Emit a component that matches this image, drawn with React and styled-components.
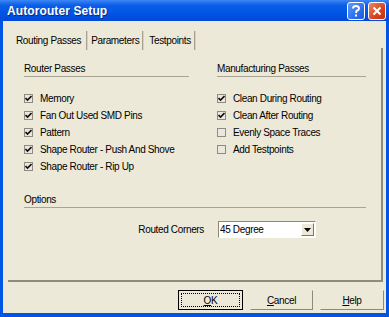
import React from 'react';
import styled, {createGlobalStyle} from 'styled-components';

const Global = createGlobalStyle`
html, body {
    margin: 0;
    padding: 0;
    background: #ece9d8;
}
body {
    font-family: "Liberation Sans", Arial, sans-serif;
    font-size: 10px;
    letter-spacing: -0.35px;
    color: #000;
}
`

const Window = styled.div`
width: 389px;
height: 317px;
display: flex;
flex-direction: column;
background: #0055e5;
box-sizing: border-box;
`

const TitleBar = styled.div`
height: 21px;
flex: none;
display: flex;
align-items: center;
padding: 0 3px 0 7px;
background: linear-gradient(#3d86f5 0%, #0a5ee8 25%, #0055e5 60%, #0049d9 100%);
color: #fff;
font-weight: bold;
font-size: 12px;
letter-spacing: 0.1px;
text-shadow: 1px 1px 0 #0a2a80;
`

const Title = styled.div`
flex: 1;
`

const CapButton = styled.div`
width: 16px;
height: 16px;
margin-left: 3px;
border: 1px solid #fff;
border-radius: 3px;
display: flex;
align-items: center;
justify-content: center;
background: ${({close}) => close
    ? 'linear-gradient(135deg, #e9886a, #d9421e 60%, #c03310)'
    : 'linear-gradient(135deg, #5d9cf7, #2c6ff0 60%, #1d58da)'};
`

const Client = styled.div`
flex: 1;
margin: 0 3px 4px 3px;
background: #ece9d8;
display: flex;
flex-direction: column;
`

const TabRow = styled.div`
display: flex;
align-items: stretch;
height: 19px;
margin-top: 10px;
padding-left: 13px;
`

const Tab = styled.div`
display: flex;
align-items: center;
padding: 0 ${({active}) => active ? '5px' : '3px'} 0 ${({active}) => active ? '0' : '2px'};
border-right: 1px solid #a6a28f;
box-shadow: 1px 0 0 #d6d2c2;
margin-right: ${({active}) => active ? '2px' : '4px'};
white-space: nowrap;
padding-bottom: 1px;
`

const Panel = styled.div`
height: 234px;
margin: -2px 3px 0 5px;
box-sizing: border-box;
border-right: 2px solid #8f8c7e;
border-bottom: 2px solid #8f8c7e;
padding: 15px 15px 0 16px;
display: flex;
flex-direction: column;
`

const Columns = styled.div`
display: flex;
gap: 28px;
`

const Column = styled.div`
width: ${({w}) => w}px;
`

const Heading = styled.div`
line-height: 12px;
height: 12px;
border-bottom: 1px solid #a7a493;
padding-bottom: 1px;
margin-bottom: 13px;
`

const Check = styled.label`
display: flex;
align-items: center;
height: 17px;
gap: 7px;
white-space: nowrap;
`

const Box = styled.span`
width: 7px;
height: 7px;
flex: none;
border: 1px solid #8d8b82;
background: #e9e8df;
display: flex;
align-items: center;
justify-content: center;
`

const Options = styled.div`
margin-top: 19px;
`

const OptionRow = styled.div`
display: flex;
align-items: center;
margin-top: 9px;
`

const OptionLabel = styled.div`
width: 180px;
text-align: right;
`

const Combo = styled.div`
margin-left: 14px;
width: 98px;
height: 17px;
box-sizing: border-box;
border-top: 1px solid #8b887b;
border-left: 1px solid #8b887b;
border-right: 1px solid #fff;
border-bottom: 1px solid #fff;
background: #fff;
display: flex;
align-items: center;
padding-left: 1px;
`

const ComboText = styled.div`
flex: 1;
`

const DropButton = styled.div`
width: 13px;
height: 13px;
margin-right: 1px;
box-sizing: border-box;
background: #ece9d8;
border-right: 1px solid #7b7868;
border-bottom: 1px solid #7b7868;
border-top: 1px solid #fff;
border-left: 1px solid #fff;
display: flex;
align-items: center;
justify-content: center;
`

const Buttons = styled.div`
display: flex;
justify-content: flex-end;
gap: 7px;
margin-top: 8px;
padding-right: 2px;
`

const Button = styled.div`
width: ${({w}) => w}px;
height: 20px;
box-sizing: border-box;
display: flex;
align-items: center;
justify-content: center;
border: 1px solid ${({primary}) => primary ? '#000' : '#ece9d8'};
border-right-color: ${({primary}) => primary ? '#000' : '#8d8a7c'};
border-bottom-color: ${({primary}) => primary ? '#000' : '#8d8a7c'};
padding: 2px;
`

const Focus = styled.div`
width: 100%;
height: 100%;
box-sizing: border-box;
display: flex;
align-items: center;
justify-content: center;
border: ${({on}) => on ? '1px dotted #000' : '1px solid transparent'};
`

const CheckItem = ({checked, children}) => (
    <Check>
        <Box>
            {checked && (
                <svg width="7" height="7" viewBox="0 0 7 7">
                    <path d="M0.5 3 L2.5 5 L6.5 1" stroke="#111" strokeWidth="1.6" fill="none"/>
                </svg>
            )}
        </Box>
        {children}
    </Check>
)

const App = () => {
    return(
        <Window>
            <Global/>
            <TitleBar>
                <Title>Autorouter Setup</Title>
                <CapButton>
                    <svg width="10" height="12" viewBox="0 0 10 12">
                        <path d="M2 3.5 Q2 1 5 1 Q8 1 8 3.5 Q8 5 5.5 6 L5 8" stroke="#fff" strokeWidth="2" fill="none"/>
                        <rect x="4" y="9.5" width="2" height="2" fill="#fff"/>
                    </svg>
                </CapButton>
                <CapButton close>
                    <svg width="10" height="10" viewBox="0 0 10 10">
                        <path d="M1.5 1.5 L8.5 8.5 M8.5 1.5 L1.5 8.5" stroke="#fff" strokeWidth="2"/>
                    </svg>
                </CapButton>
            </TitleBar>
            <Client>
                <TabRow>
                    <Tab active>Routing Passes</Tab>
                    <Tab>Parameters</Tab>
                    <Tab>Testpoints</Tab>
                </TabRow>
                <Panel>
                    <Columns>
                        <Column w={166}>
                            <Heading>Router Passes</Heading>
                            <CheckItem checked>Memory</CheckItem>
                            <CheckItem checked>Fan Out Used SMD Pins</CheckItem>
                            <CheckItem checked>Pattern</CheckItem>
                            <CheckItem checked>Shape Router - Push And Shove</CheckItem>
                            <CheckItem checked>Shape Router - Rip Up</CheckItem>
                        </Column>
                        <Column w={150}>
                            <Heading>Manufacturing Passes</Heading>
                            <CheckItem checked>Clean During Routing</CheckItem>
                            <CheckItem checked>Clean After Routing</CheckItem>
                            <CheckItem>Evenly Space Traces</CheckItem>
                            <CheckItem>Add Testpoints</CheckItem>
                        </Column>
                    </Columns>
                    <Options>
                        <Heading>Options</Heading>
                        <OptionRow>
                            <OptionLabel>Routed Corners</OptionLabel>
                            <Combo>
                                <ComboText>45 Degree</ComboText>
                                <DropButton>
                                    <svg width="7" height="4" viewBox="0 0 7 4">
                                        <path d="M0 0 H7 L3.5 4 Z" fill="#000"/>
                                    </svg>
                                </DropButton>
                            </Combo>
                        </OptionRow>
                    </Options>
                </Panel>
                <Buttons>
                    <Button primary w={65}><Focus on><u>O</u>K</Focus></Button>
                    <Button w={63}><Focus><u>C</u>ancel</Focus></Button>
                    <Button w={64}><Focus><u>H</u>elp</Focus></Button>
                </Buttons>
            </Client>
        </Window>
    )
}

export default App;
